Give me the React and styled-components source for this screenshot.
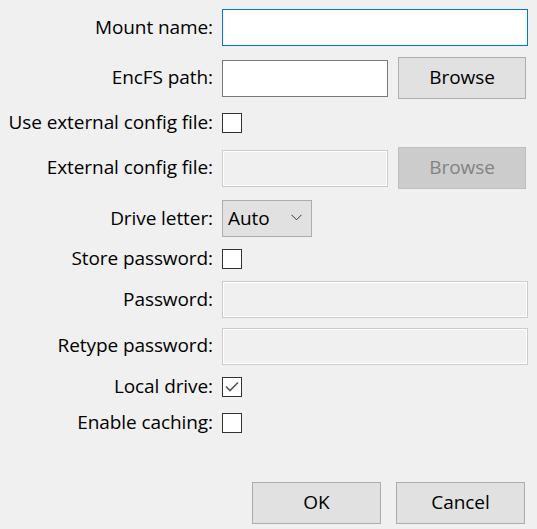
import React from 'react';
import styled, { createGlobalStyle } from 'styled-components';

const GlobalStyle = createGlobalStyle`
    html, body {
        margin: 0;
        padding: 0;
        background: #f0f0f0;
    }
    body {
        font-family: "Open Sans", "Noto Sans", "Liberation Sans", sans-serif;
        color: #000;
    }
`;

const Dialog = styled.div`
    width: 537px;
    height: 529px;
    box-sizing: border-box;
    background: #f0f0f0;
    display: flex;
    flex-direction: column;
`;

// rows are sized so that each control sits centred where Qt's form layout put it
const Form = styled.div`
    display: grid;
    grid-template-columns: 213px 1fr;
    grid-template-rows: 51px 50px 39px 52px 49px 32px 49px 44px 38px 33px;
    column-gap: 9px;
    padding: 2px 9px 0 0;
    align-items: center;
`;

const Label = styled.label`
    justify-self: end;
    font-size: 19px;
    line-height: 24px;
    padding-bottom: 2px;
    white-space: nowrap;
    letter-spacing: -0.08px;
`;

const FieldRow = styled.div`
    display: flex;
    align-items: center;
    gap: 10px;
`;

const TextInput = styled.div`
    box-sizing: border-box;
    height: 37px;
    width: ${p => (p.$half ? '166px' : '306px')};
    background: ${p => (p.$disabled ? '#f0f0f0' : '#fff')};
    border: 1px solid ${p => (p.$focused ? '#0078d7' : p.$disabled ? '#cccccc' : '#7a7a7a')};
    box-shadow: ${p => (p.$disabled ? 'inset 0 0 0 1px #fff' : 'none')};
`;

const Button = styled.div`
    box-sizing: border-box;
    width: ${p => p.$width || 128}px;
    height: ${p => p.$height || 42}px;
    display: flex;
    align-items: center;
    justify-content: center;
    padding-bottom: 2px;
    font-size: 19px;
    letter-spacing: -0.08px;
    background: ${p => (p.$disabled ? '#cccccc' : '#e1e1e1')};
    border: 1px solid ${p => (p.$disabled ? '#bfbfbf' : '#adadad')};
    color: ${p => (p.$disabled ? '#838383' : '#000')};
`;

const Combo = styled.div`
    box-sizing: border-box;
    width: 90px;
    height: 37px;
    display: flex;
    align-items: center;
    justify-content: space-between;
    padding: 0 9px 2px 5px;
    font-size: 19px;
    letter-spacing: -0.08px;
    background: #e1e1e1;
    border: 1px solid #adadad;
`;

const Box = styled.div`
    box-sizing: border-box;
    width: 20px;
    height: 20px;
    background: #fff;
    border: 1px solid #333;
    display: flex;
    align-items: center;
    justify-content: center;
`;

const ButtonBar = styled.div`
    display: flex;
    justify-content: flex-end;
    gap: 15px;
    padding: 43px 12px 0 0;
`;

const Chevron = () => (
    <svg width="11" height="7" viewBox="0 0 11 7">
        <path d="M0.5 0.8 L5.5 5.8 L10.5 0.8" fill="none" stroke="#333" strokeWidth="1" />
    </svg>
);

const Checkbox = ({ checked }) => (
    <Box>
        {checked && (
            <svg width="14" height="12" viewBox="0 0 14 12">
                <path d="M1 5.5 L5 9.5 L13 1.5" fill="none" stroke="#555" strokeWidth="1.6" />
            </svg>
        )}
    </Box>
);

const App = () => {
    return (
        <Dialog>
            <GlobalStyle />
            <Form>
                <Label>Mount name:</Label>
                <TextInput $focused />

                <Label>EncFS path:</Label>
                <FieldRow>
                    <TextInput $half />
                    <Button>Browse</Button>
                </FieldRow>

                <Label>Use external config file:</Label>
                <Checkbox />

                <Label>External config file:</Label>
                <FieldRow>
                    <TextInput $half $disabled />
                    <Button $disabled>Browse</Button>
                </FieldRow>

                <Label>Drive letter:</Label>
                <Combo>
                    <span>Auto</span>
                    <Chevron />
                </Combo>

                <Label>Store password:</Label>
                <Checkbox />

                <Label>Password:</Label>
                <TextInput $disabled />

                <Label>Retype password:</Label>
                <TextInput $disabled />

                <Label>Local drive:</Label>
                <Checkbox checked />

                <Label>Enable caching:</Label>
                <Checkbox />
            </Form>
            <ButtonBar>
                <Button $width={129}>OK</Button>
                <Button $width={129}>Cancel</Button>
            </ButtonBar>
        </Dialog>
    );
};

export default App;
